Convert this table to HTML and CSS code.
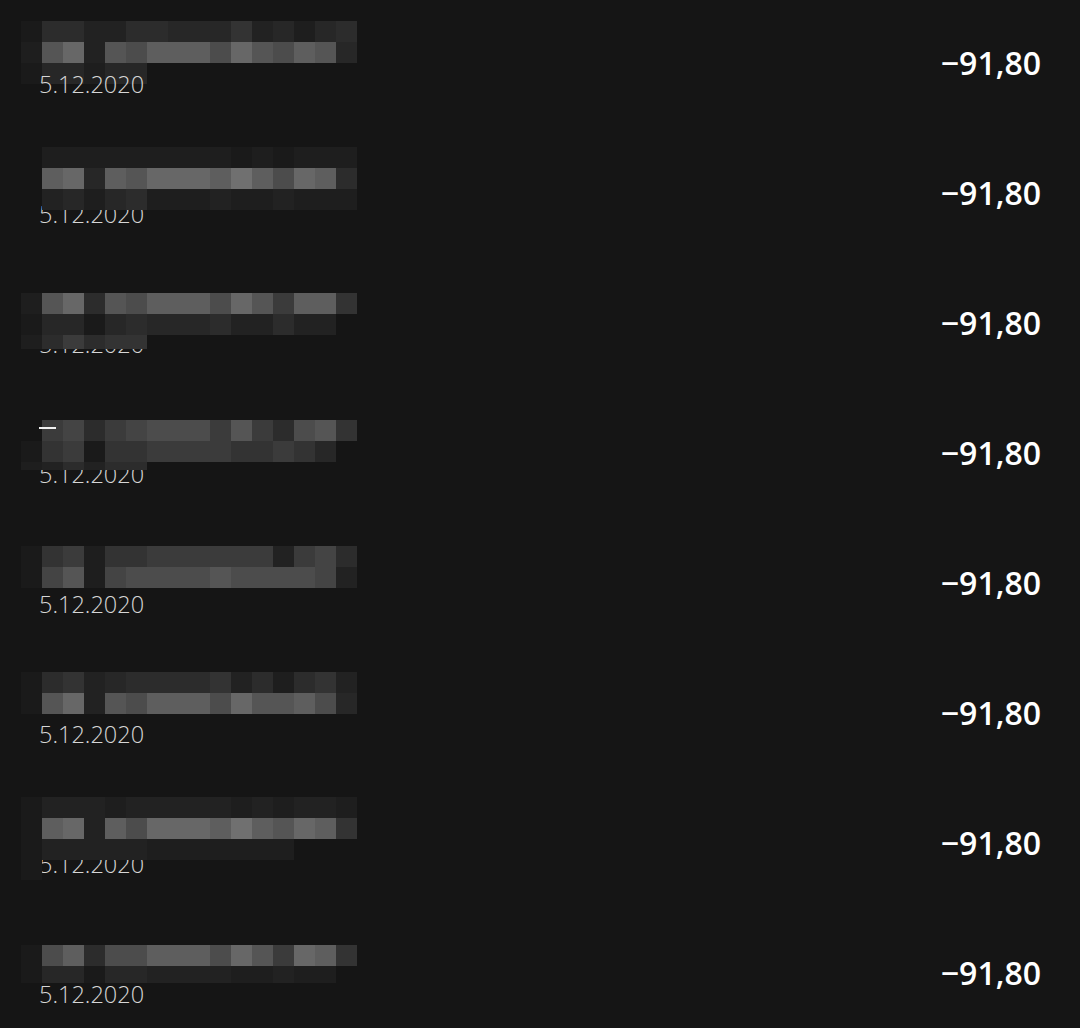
FILE: index.html
```html
<!DOCTYPE html>
<html lang="fi">
<head>
<meta charset="utf-8">
<title>Tapahtumat</title>
<link rel="stylesheet" href="styles.css">
</head>
<body>
<ul class="list">
  <li class="row">
    <div class="mosaic behind" data-top="21" data-m="1553355444634245|2ac3a9bbb9ca9ba4|144244"></div>
    <span class="date">5.12.2020</span>
    <span class="amount">−91,80</span>
  </li>
  <li class="row">
    <div class="mosaic" data-top="17" data-m=".222222222121222.|.bc4bacccbdb9cb5|.342452223223222."></div>
    <span class="date">5.12.2020</span>
    <span class="amount">−91,80</span>
  </li>
  <li class="row">
    <div class="mosaic" data-top="33" data-h="21,21,14" data-m="2ac5a9bbb9ca7bb6|144145444533533.|257566"></div>
    <span class="date">5.12.2020</span>
    <span class="amount">−91,80</span>
  </li>
  <li class="row">
    <div class="mosaic" data-top="30" data-h="21,21,8" data-m=".785789997a759a6|167166777766764.|235355"></div>
    <span class="tick"></span>
    <span class="date">5.12.2020</span>
    <span class="amount">−91,80</span>
  </li>
  <li class="row">
    <div class="mosaic behind" data-top="26" data-m="1672667777773785|18a289999a999983"></div>
    <span class="date">5.12.2020</span>
    <span class="amount">−91,80</span>
  </li>
  <li class="row">
    <div class="mosaic behind" data-top="22" data-m="1563455556352563|1ac3a9bbb9caab94"></div>
    <span class="date">5.12.2020</span>
    <span class="amount">−91,80</span>
  </li>
  <li class="row">
    <div class="mosaic" data-top="17" data-h="21,21,21,20" data-m="1333233333232332|1bc3b9cccbdbacb6|1333332222222...|1"></div>
    <span class="date">5.12.2020</span>
    <span class="amount">−91,80</span>
  </li>
  <li class="row">
    <div class="mosaic behind" data-top="35" data-h="21,17" data-m="19b599bbb9ca7cb6|144144333322322."></div>
    <span class="date">5.12.2020</span>
    <span class="amount">−91,80</span>
  </li>
</ul>
<script src="script.js"></script>
</body>
</html>
```

FILE: styles.css
```css
* { box-sizing: border-box; }
html, body {
  margin: 0;
  padding: 0;
  background: #151515;
}
body {
  font-family: "Open Sans", Lato, "DejaVu Sans", sans-serif;
  overflow: hidden;
}
.list {
  list-style: none;
  margin: 0;
  padding: 0;
}
.row {
  position: relative;
  height: 130px;
  padding: 0 39px;
  display: flex;
  justify-content: space-between;
  align-items: flex-start;
}
.date {
  position: relative;
  z-index: 1;
  margin-top: 70px;
  font-size: 23.5px;
  line-height: 28px;
  font-weight: 300;
  color: #d6d6d6;
}
.amount {
  margin-top: 45px;
  font-size: 32px;
  line-height: 36px;
  font-weight: 600;
  color: #ffffff;
}
.tick {
  position: absolute;
  left: 39px;
  top: 37px;
  width: 17px;
  height: 2px;
  background: #f0f0f0;
  z-index: 3;
}
.mosaic {
  position: absolute;
  left: 21px;
  z-index: 2;
  display: grid;
  grid-template-columns: repeat(16, 21px);
  grid-auto-rows: 21px;
}
.mosaic.behind { z-index: 0; }
.k0 { background: transparent; }
.k1 { background: #1a1a1a; }
.k2 { background: #1e1e1e; }
.k3 { background: #222222; }
.k4 { background: #272727; }
.k5 { background: #2c2c2c; }
.k6 { background: #333333; }
.k7 { background: #3b3b3b; }
.k8 { background: #444444; }
.k9 { background: #4c4c4c; }
.ka { background: #555555; }
.kb { background: #5e5e5e; }
.kc { background: #676767; }
.kd { background: #707070; }
```

FILE: script.js
```js
document.querySelectorAll('.mosaic').forEach(function (m) {
  var raw = (m.getAttribute('data-m') || '').replace(/[^0-9a-d.|]/g, '');
  var heights = m.getAttribute('data-h');
  m.style.top = m.getAttribute('data-top') + 'px';
  if (heights) {
    m.style.gridTemplateRows = heights.split(',').map(function (h) { return h + 'px'; }).join(' ');
  }
  raw.split('|').forEach(function (band) {
    for (var i = 0; i < 16; i++) {
      var ch = band.charAt(i) || '.';
      var cell = document.createElement('span');
      cell.className = ch === '.' ? 'k0' : 'k' + ch;
      m.appendChild(cell);
    }
  });
});
```
